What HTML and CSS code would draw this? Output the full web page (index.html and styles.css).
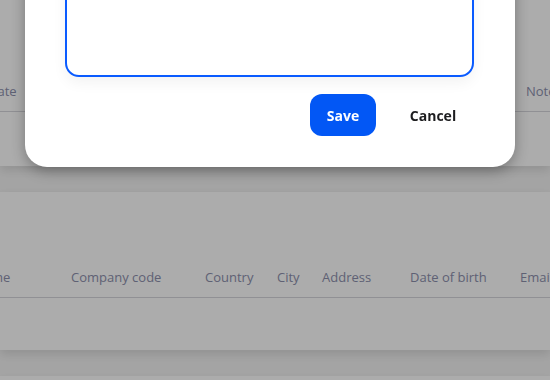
FILE: index.html
```html
<!DOCTYPE html>
<html lang="en">
  <head>
    <meta charset="UTF-8" />
    <meta name="viewport" content="width=device-width, initial-scale=1.0" />
    <title>Employees</title>
    <link rel="stylesheet" href="styles.css">
  </head>
  <body>
    <div class="page">
      <div class="card card-first">
        <div class="table-head head-first">
          <span>Date</span>
          <span>Note</span>
        </div>
        <div class="table-row"></div>
      </div>

      <div class="card">
        <div class="card-toolbar"></div>
        <div class="table-head head-second">
          <span>Name</span>
          <span>Company code</span>
          <span>Country</span>
          <span>City</span>
          <span>Address</span>
          <span>Date of birth</span>
          <span>Email</span>
        </div>
        <div class="table-row"></div>
      </div>

      <div class="card card-last"></div>
    </div>

    <!-- Modal -->
    <div class="overlay"></div>
    <div class="modal">
      <textarea class="note-input"></textarea>
      <div class="modal-actions">
        <button class="btn btn-primary">Save</button>
        <button class="btn btn-text">Cancel</button>
      </div>
    </div>
  </body>
</html>
```

FILE: styles.css
```css
html, body {
  height: 380px;
  overflow: hidden;
}
body {
  margin: 0;
  background-color: #f4f4f4;
  font-family: "Open Sans", "DejaVu Sans", sans-serif;
}
.page {
  display: flex;
  flex-direction: column;
  gap: 26px;
}
.card {
  background-color: #ffffff;
  box-shadow: 0 4px 10px rgba(0, 0, 0, 0.12);
}
.card-first {
  padding-top: 70px;
}
.card-last {
  height: 4px;
}
.card-toolbar {
  height: 64px;
}
.table-head {
  display: grid;
  align-items: center;
  height: 41px;
  border-bottom: 1px solid #d6d6dc;
  font-size: 13px;
  color: #8d90ad;
  white-space: nowrap;
  overflow: hidden;
}
.head-first {
  grid-template-columns: 538px auto;
  margin-left: -12px;
}
.head-second {
  grid-template-columns: 97px 134px 72px 45px 88px 110px auto;
  margin-left: -26px;
}
.table-row {
  height: 52px;
}
.card-first .table-row {
  height: 54px;
}

/* Modal */
.overlay {
  position: fixed;
  inset: 0;
  background-color: rgba(0, 0, 0, 0.325);
}
.modal {
  position: fixed;
  left: 25px;
  bottom: 213px;
  width: 490px;
  box-sizing: border-box;
  padding: 40px 41px 31px 40px;
  background-color: #ffffff;
  border-radius: 22px;
  box-shadow: 0 4px 14px rgba(0, 0, 0, 0.3);
}
.note-input {
  display: block;
  width: 100%;
  height: 160px;
  box-sizing: border-box;
  border: 2px solid #0a5bff;
  border-radius: 14px;
  outline: none;
  resize: none;
  box-shadow: 0 6px 14px rgba(0, 0, 0, 0.05);
}
.modal-actions {
  display: flex;
  justify-content: flex-end;
  gap: 16px;
  margin-top: 17px;
}
.btn {
  height: 42px;
  border: none;
  border-radius: 12px;
  padding: 0 16px;
  font-family: "Open Sans", "DejaVu Sans", sans-serif;
  font-size: 14px;
  font-weight: 700;
  cursor: pointer;
}
.btn-primary {
  width: 66px;
  background-color: #0257f5;
  color: #ffffff;
}
.btn-text {
  width: 82px;
  background-color: transparent;
  color: #1d1d1f;
}
```
